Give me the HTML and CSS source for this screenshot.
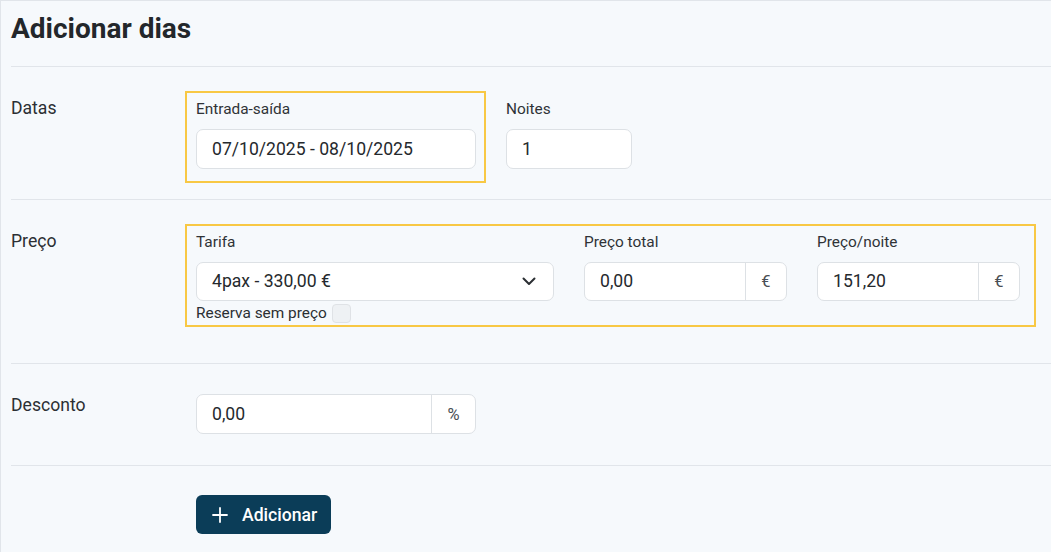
FILE: index.html
```html
<!DOCTYPE html>
<html lang="pt">
<head>
<meta charset="utf-8">
<title>Adicionar dias</title>
<link rel="stylesheet" href="styles.css">
</head>
<body>
<div class="panel">
  <h1 class="title">Adicionar dias</h1>

  <section class="row row-dates">
    <div class="row-label">Datas</div>
    <div class="row-body">
      <div class="hl">
        <div class="field field-range">
          <label class="field-label">Entrada-saída</label>
          <div class="input">07/10/2025 - 08/10/2025</div>
        </div>
      </div>
      <div class="field field-nights">
        <label class="field-label">Noites</label>
        <div class="input">1</div>
      </div>
    </div>
  </section>

  <section class="row row-price">
    <div class="row-label">Preço</div>
    <div class="row-body">
      <div class="hl hl-price">
        <div class="field field-tarifa">
          <label class="field-label">Tarifa</label>
          <div class="input select">
            <span>4pax - 330,00 €</span>
            <svg class="chev" width="14" height="9" viewBox="0 0 14 9"><path d="M1.5 1.5 L7 7 L12.5 1.5" fill="none" stroke="#2b2f33" stroke-width="2" stroke-linecap="round" stroke-linejoin="round"/></svg>
          </div>
          <div class="check-row">
            <span>Reserva sem preço</span>
            <span class="checkbox"></span>
          </div>
        </div>
        <div class="field field-money">
          <label class="field-label">Preço total</label>
          <div class="group">
            <div class="input group-input">0,00</div>
            <div class="addon">€</div>
          </div>
        </div>
        <div class="field field-money">
          <label class="field-label">Preço/noite</label>
          <div class="group">
            <div class="input group-input">151,20</div>
            <div class="addon">€</div>
          </div>
        </div>
      </div>
    </div>
  </section>

  <section class="row row-discount">
    <div class="row-label">Desconto</div>
    <div class="row-body body-plain">
      <div class="group group-discount">
        <div class="input group-input">0,00</div>
        <div class="addon addon-pct">%</div>
      </div>
    </div>
  </section>

  <section class="row row-actions">
    <div class="row-label"></div>
    <div class="row-body body-plain">
      <button class="btn" type="button">
        <svg width="16" height="16" viewBox="0 0 16 16"><path d="M8 1 V15 M1 8 H15" stroke="#ffffff" stroke-width="1.8" stroke-linecap="round"/></svg>
        <span>Adicionar</span>
      </button>
    </div>
  </section>
</div>
</body>
</html>
```

FILE: styles.css
```css
* { box-sizing: border-box; }
html, body {
  margin: 0;
  padding: 0;
  background: #f6f9fc;
}
body {
  font-family: Roboto, "Liberation Sans", Arial, sans-serif;
  color: #2b2f33;
  width: 1051px;
  height: 552px;
  overflow: hidden;
}
.panel {
  height: 552px;
  border-top: 1px solid #e1e5ea;
  border-left: 1px solid #e1e5ea;
  padding-left: 10px;
  background: #f6f9fc;
}
.title {
  margin: 11px 0 20px 0;
  font-size: 28px;
  line-height: 34px;
  font-weight: 700;
  color: #23272b;
}
.row {
  display: flex;
  border-top: 1px solid #e1e5ea;
}
.row-label {
  width: 174px;
  flex: none;
  font-size: 17.6px;
  line-height: 24px;
  padding-top: 5px;
}
.row-body {
  display: flex;
  align-items: flex-start;
}
.body-plain {
  padding-left: 11px;
}
.row-dates { padding: 24px 0 16px 0; }
.row-price { padding: 24px 0 36px 0; }
.row-discount { padding: 30px 0 31px 0; }
.row-discount .row-label { padding-top: 0; margin-top: -1px; }
.row-actions { padding: 29px 0 0 0; }

.hl {
  border: 2px solid #f8c844;
  padding: 6px 8px 12px 9px;
  display: flex;
}
.hl-price {
  width: 851px;
  padding: 6px 13px 2px 9px;
  gap: 30px;
}
.field-label {
  display: block;
  font-size: 15.4px;
  line-height: 20px;
  margin-bottom: 10px;
  color: #2f3337;
}
.input {
  height: 40px;
  background: #ffffff;
  border: 1px solid #dde1e5;
  border-radius: 7px;
  font-size: 17.6px;
  line-height: 38px;
  padding: 0 15px;
  color: #25292d;
  white-space: nowrap;
}
.field-range .input { width: 280px; }
.field-nights {
  margin-left: 20px;
  padding-top: 8px;
}
.field-nights .input { width: 126px; }

.field-tarifa { width: 358px; }
.select {
  height: 39px;
  line-height: 37px;
  display: flex;
  align-items: center;
  justify-content: space-between;
  padding-right: 17px;
}
.chev { display: block; }
.check-row {
  display: flex;
  align-items: center;
  gap: 5px;
  height: 20px;
  margin-top: 2px;
  font-size: 15.4px;
}
.checkbox {
  width: 19px;
  height: 19px;
  border: 1px solid #dfe2e6;
  background: #eef1f4;
  border-radius: 4px;
}
.field-money { width: 203px; }
.group {
  display: flex;
  height: 39px;
  background: #ffffff;
  border: 1px solid #dde1e5;
  border-radius: 7px;
}
.group-input {
  flex: 1;
  border: none;
  background: transparent;
  height: 37px;
  line-height: 37px;
}
.addon {
  width: 41px;
  border-left: 1px solid #dde1e5;
  display: flex;
  align-items: center;
  justify-content: center;
  font-size: 16.5px;
  color: #4a4f55;
}
.group-discount {
  width: 280px;
  height: 40px;
}
.group-discount .group-input { height: 38px; line-height: 38px; }
.addon-pct { width: 44px; }

.btn {
  display: flex;
  align-items: center;
  gap: 14px;
  height: 39px;
  width: 135px;
  padding: 0 15px 0 16px;
  background: #0b3d58;
  color: #ffffff;
  border: none;
  border-radius: 6px;
  font-family: Roboto, "Liberation Sans", Arial, sans-serif;
  font-size: 17.6px;
  font-weight: 500;
}
.btn svg { display: block; flex: none; }
```
